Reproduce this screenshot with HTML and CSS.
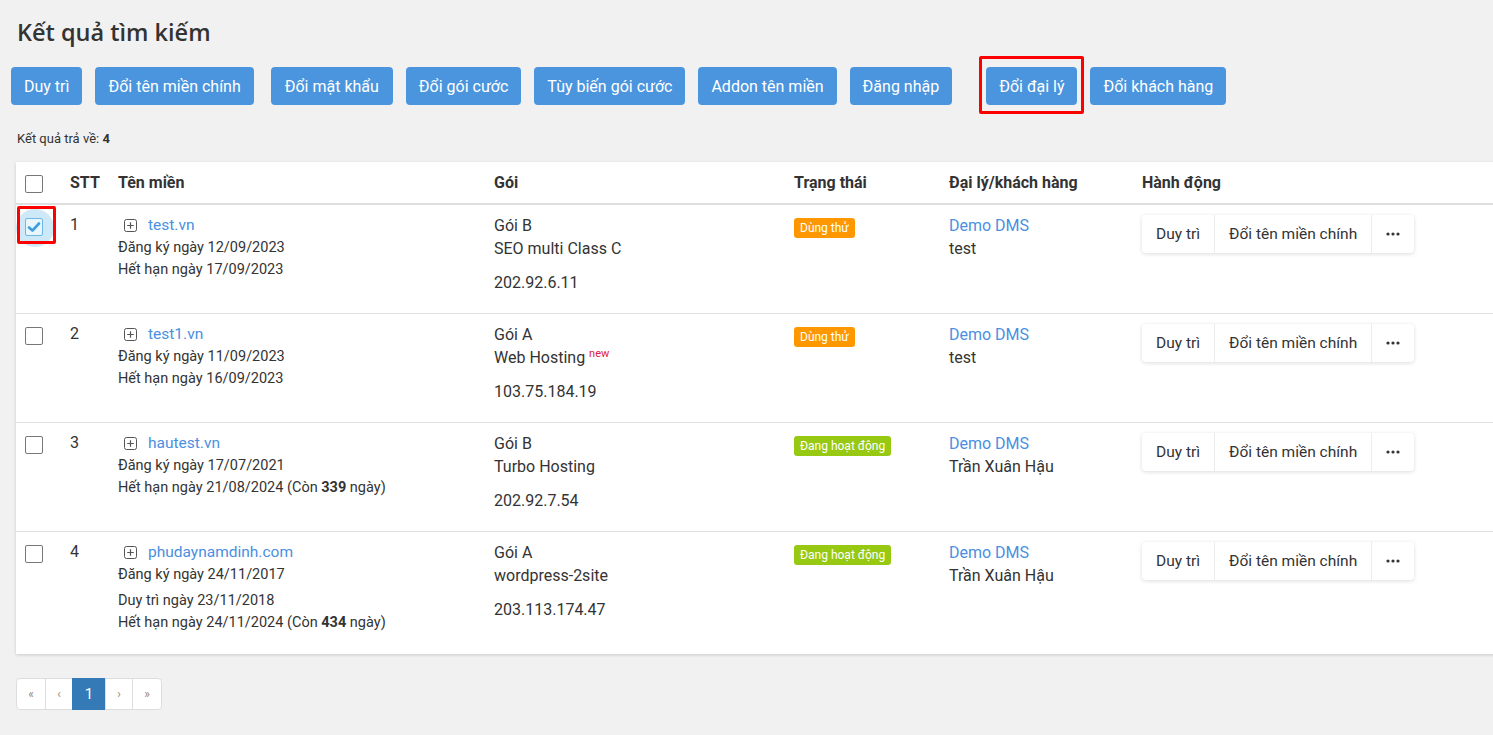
FILE: index.html
```html
<!DOCTYPE html>
<html lang="vi">
<head>
<meta charset="utf-8">
<title>Kết quả tìm kiếm</title>
<link rel="stylesheet" href="styles.css">
</head>
<body>
<div class="page">
  <h1 class="title">Kết quả tìm kiếm</h1>
  <div class="toolbar">
    <button class="btn">Duy trì</button>
    <button class="btn">Đổi tên miền chính</button>
    <button class="btn gap-l wide">Đổi mật khẩu</button>
    <button class="btn">Đổi gói cước</button>
    <button class="btn">Tùy biến gói cước</button>
    <button class="btn">Addon tên miền</button>
    <button class="btn">Đăng nhập</button>
    <button class="btn marked gap-xl">Đổi đại lý</button>
    <button class="btn">Đổi khách hàng</button>
  </div>
  <div class="count">Kết quả trả về: <b>4</b></div>

  <div class="card">
    <table class="grid">
      <colgroup>
        <col class="c-check"><col class="c-stt"><col class="c-domain"><col class="c-pack"><col class="c-status"><col class="c-agent"><col class="c-action">
      </colgroup>
      <thead>
        <tr>
          <th><span class="cb"></span></th>
          <th>STT</th>
          <th>Tên miền</th>
          <th>Gói</th>
          <th>Trạng thái</th>
          <th>Đại lý/khách hàng</th>
          <th>Hành động</th>
        </tr>
      </thead>
      <tbody>
        <tr>
          <td><span class="cb-wrap marked-cb"><span class="ripple"></span><span class="cb checked"><svg viewBox="0 0 18 18" width="18" height="18"><path d="M4 9.5 L7.5 12.5 L14 5.5" fill="none" stroke="#3d9fe2" stroke-width="2.6" stroke-linecap="round" stroke-linejoin="round"/></svg></span></span></td>
          <td class="num">1</td>
          <td>
            <div class="domain"><span class="plus"><svg viewBox="0 0 13 13" width="13" height="13"><rect x="0.5" y="0.5" width="12" height="12" rx="2" fill="none" stroke="#555"/><path d="M6.5 3.2V9.8M3.2 6.5H9.8" stroke="#555" stroke-width="1.2"/></svg></span><a href="#">test.vn</a></div>
            <div class="line">Đăng ký ngày 12/09/2023</div>
            <div class="line">Hết hạn ngày 17/09/2023</div>
          </td>
          <td>
            <div class="pline">Gói B</div>
            <div class="pline">SEO multi Class C</div>
            <div class="pline ip">202.92.6.11</div>
          </td>
          <td><span class="badge trial">Dùng thử</span></td>
          <td><div class="pline"><a href="#">Demo DMS</a></div><div class="pline">test</div></td>
          <td>
            <div class="actions"><span class="seg">Duy trì</span><span class="seg">Đổi tên miền chính</span><span class="seg more"><svg viewBox="0 0 14 4" width="14" height="4"><circle cx="2" cy="2" r="1.6" fill="#333"/><circle cx="7" cy="2" r="1.6" fill="#333"/><circle cx="12" cy="2" r="1.6" fill="#333"/></svg></span></div>
          </td>
        </tr>
        <tr>
          <td><span class="cb-wrap"><span class="cb"></span></span></td>
          <td class="num">2</td>
          <td>
            <div class="domain"><span class="plus"><svg viewBox="0 0 13 13" width="13" height="13"><rect x="0.5" y="0.5" width="12" height="12" rx="2" fill="none" stroke="#555"/><path d="M6.5 3.2V9.8M3.2 6.5H9.8" stroke="#555" stroke-width="1.2"/></svg></span><a href="#">test1.vn</a></div>
            <div class="line">Đăng ký ngày 11/09/2023</div>
            <div class="line">Hết hạn ngày 16/09/2023</div>
          </td>
          <td>
            <div class="pline">Gói A</div>
            <div class="pline">Web Hosting <sup class="new">new</sup></div>
            <div class="pline ip">103.75.184.19</div>
          </td>
          <td><span class="badge trial">Dùng thử</span></td>
          <td><div class="pline"><a href="#">Demo DMS</a></div><div class="pline">test</div></td>
          <td>
            <div class="actions"><span class="seg">Duy trì</span><span class="seg">Đổi tên miền chính</span><span class="seg more"><svg viewBox="0 0 14 4" width="14" height="4"><circle cx="2" cy="2" r="1.6" fill="#333"/><circle cx="7" cy="2" r="1.6" fill="#333"/><circle cx="12" cy="2" r="1.6" fill="#333"/></svg></span></div>
          </td>
        </tr>
        <tr>
          <td><span class="cb-wrap"><span class="cb"></span></span></td>
          <td class="num">3</td>
          <td>
            <div class="domain"><span class="plus"><svg viewBox="0 0 13 13" width="13" height="13"><rect x="0.5" y="0.5" width="12" height="12" rx="2" fill="none" stroke="#555"/><path d="M6.5 3.2V9.8M3.2 6.5H9.8" stroke="#555" stroke-width="1.2"/></svg></span><a href="#">hautest.vn</a></div>
            <div class="line">Đăng ký ngày 17/07/2021</div>
            <div class="line">Hết hạn ngày 21/08/2024 (Còn <b>339</b> ngày)</div>
          </td>
          <td>
            <div class="pline">Gói B</div>
            <div class="pline">Turbo Hosting</div>
            <div class="pline ip">202.92.7.54</div>
          </td>
          <td><span class="badge active">Đang hoạt động</span></td>
          <td><div class="pline"><a href="#">Demo DMS</a></div><div class="pline">Trần Xuân Hậu</div></td>
          <td>
            <div class="actions"><span class="seg">Duy trì</span><span class="seg">Đổi tên miền chính</span><span class="seg more"><svg viewBox="0 0 14 4" width="14" height="4"><circle cx="2" cy="2" r="1.6" fill="#333"/><circle cx="7" cy="2" r="1.6" fill="#333"/><circle cx="12" cy="2" r="1.6" fill="#333"/></svg></span></div>
          </td>
        </tr>
        <tr>
          <td><span class="cb-wrap"><span class="cb"></span></span></td>
          <td class="num">4</td>
          <td>
            <div class="domain"><span class="plus"><svg viewBox="0 0 13 13" width="13" height="13"><rect x="0.5" y="0.5" width="12" height="12" rx="2" fill="none" stroke="#555"/><path d="M6.5 3.2V9.8M3.2 6.5H9.8" stroke="#555" stroke-width="1.2"/></svg></span><a href="#">phudaynamdinh.com</a></div>
            <div class="line">Đăng ký ngày 24/11/2017</div>
            <div class="line renew">Duy trì ngày 23/11/2018</div>
            <div class="line">Hết hạn ngày 24/11/2024 (Còn <b>434</b> ngày)</div>
          </td>
          <td>
            <div class="pline">Gói A</div>
            <div class="pline">wordpress-2site</div>
            <div class="pline ip">203.113.174.47</div>
          </td>
          <td><span class="badge active">Đang hoạt động</span></td>
          <td><div class="pline"><a href="#">Demo DMS</a></div><div class="pline">Trần Xuân Hậu</div></td>
          <td>
            <div class="actions"><span class="seg">Duy trì</span><span class="seg">Đổi tên miền chính</span><span class="seg more"><svg viewBox="0 0 14 4" width="14" height="4"><circle cx="2" cy="2" r="1.6" fill="#333"/><circle cx="7" cy="2" r="1.6" fill="#333"/><circle cx="12" cy="2" r="1.6" fill="#333"/></svg></span></div>
          </td>
        </tr>
      </tbody>
    </table>
  </div>

  <ul class="pager">
    <li class="pg w30">«</li>
    <li class="pg w27">‹</li>
    <li class="pg current">1</li>
    <li class="pg w27">›</li>
    <li class="pg w30">»</li>
  </ul>
</div>
</body>
</html>
```
FILE: styles.css
```css
html, body {
  margin: 0;
  padding: 0;
  background: #f1f1f1;
  overflow: hidden;
}
body {
  font-family: Roboto, "Liberation Sans", Arial, sans-serif;
  color: #333;
  font-size: 15px;
}
.page {
  padding: 17px 0 0 16px;
  width: 1500px;
}
.title {
  margin: 0 0 20px 1px;
  font-family: "Open Sans", "Liberation Sans", sans-serif;
  font-weight: 600;
  font-size: 23.5px;
  line-height: 30px;
  color: #333;
}
.toolbar {
  display: flex;
  gap: 13px;
  margin-left: -5px;
}
.btn {
  height: 38px;
  padding: 0 13px;
  border: none;
  border-radius: 4px;
  background: #4a95de;
  color: #fff;
  font-family: Roboto, "Liberation Sans", sans-serif;
  font-size: 16px;
  position: relative;
}
.btn.wide { padding: 0 14px; }
.btn.gap-l { margin-left: 4px; }
.btn.gap-xl { margin-left: 21px; }
.btn.marked::after {
  content: "";
  position: absolute;
  left: -7px;
  right: -7px;
  top: -11px;
  bottom: -9px;
  border: 3px solid #f00;
  border-radius: 2px;
}
.count {
  margin: 25px 0 14px 1px;
  font-size: 13px;
  line-height: 18px;
}
.count b { font-weight: 700; }

.card {
  background: #fff;
  box-shadow: 0 1px 3px rgba(0,0,0,0.16);
}
.grid {
  width: 100%;
  border-collapse: collapse;
  table-layout: fixed;
}
.c-check { width: 46px; }
.c-stt { width: 48px; }
.c-domain { width: 376px; }
.c-pack { width: 300px; }
.c-status { width: 155px; }
.c-agent { width: 193px; }
.grid th {
  text-align: left;
  font-weight: 700;
  font-size: 16px;
  line-height: 22px;
  height: 22px;
  padding: 10px 8px 9px;
  border-bottom: 2px solid #dedede;
  vertical-align: middle;
}
.grid th:first-child, .grid td:first-child { padding-left: 9px; }
.grid td {
  vertical-align: top;
  padding: 9px 8px 19px;
  border-bottom: 1px solid #e0e0e0;
  font-size: 16px;
}
.grid tbody tr:last-child td { border-bottom: none; padding-bottom: 20px; }
.num { line-height: 22px; }

.cb {
  display: block;
  width: 16px;
  height: 16px;
  border: 1px solid #777;
  border-radius: 2px;
  background: #fff;
  box-sizing: content-box;
}
th .cb { margin-top: 1px; }
.cb-wrap {
  display: block;
  position: relative;
  margin-top: 4px;
  width: 18px;
  height: 18px;
}
.cb.checked {
  position: relative;
  border-color: #6cb8e8;
  background: #eaf6fd;
  width: 16px;
  height: 16px;
}
.cb.checked svg { position: absolute; left: -1px; top: -1px; }
.ripple {
  position: absolute;
  left: -9px;
  top: -9px;
  width: 38px;
  height: 38px;
  border-radius: 50%;
  background: #cde9f7;
}
.marked-cb::after {
  content: "";
  position: absolute;
  left: -8px;
  top: -12px;
  width: 33px;
  height: 32px;
  border: 3px solid #f00;
  border-radius: 2px;
}

.domain {
  display: flex;
  align-items: center;
  line-height: 23px;
  font-size: 15.5px;
}
.plus {
  display: inline-flex;
  margin: 0 11px 0 6px;
}
a {
  color: #4a8fe2;
  text-decoration: none;
}
.line {
  line-height: 22px;
  font-size: 14.5px;
}
.line b { font-weight: 700; }
.line.renew { margin-top: 4px; }
.pline { line-height: 23px; }
.pline.ip { margin-top: 11px; }
.new {
  color: #e0203a;
  font-size: 11px;
  vertical-align: 6px;
  line-height: 0;
}

.badge {
  display: inline-block;
  margin-top: 4px;
  height: 20px;
  line-height: 20px;
  padding: 0 6px;
  border-radius: 3px;
  color: #fff;
  font-size: 12px;
}
.badge.trial { background: #ff9800; }
.badge.active { background: #97c812; }

.actions {
  display: inline-flex;
  margin-top: 1px;
  height: 38px;
  background: #fff;
  border-radius: 4px;
  box-shadow: 0 1px 4px rgba(0,0,0,0.14);
}
.seg {
  display: flex;
  align-items: center;
  padding: 0 14px;
  font-size: 15.5px;
  border-left: 1px solid #ececec;
}
.seg:first-child { border-left: none; }
.seg.more { padding: 0 14px; }

.pager {
  display: flex;
  list-style: none;
  margin: 24px 0 0;
  padding: 0;
}
.pg {
  box-sizing: border-box;
  height: 32px;
  line-height: 30px;
  border: 1px solid #ddd;
  margin-left: -1px;
  background: #fff;
  color: #9a8676;
  font-size: 12px;
  text-align: center;
}
.pg.w30 { width: 30px; }
.pg.w27 { width: 28px; }
.pg:first-child { margin-left: 0; border-radius: 4px 0 0 4px; }
.pg:last-child { border-radius: 0 4px 4px 0; }
.pg.current {
  width: 34px;
  background: #337ab7;
  border-color: #337ab7;
  color: #fff;
  font-size: 15px;
}
```
